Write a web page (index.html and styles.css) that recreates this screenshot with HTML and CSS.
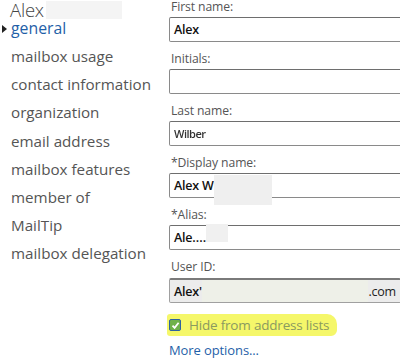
FILE: index.html
```html
<!DOCTYPE html>
<html lang="en">
<head>
    <meta charset="UTF-8">
    <title>Alex - general</title>
    <link rel="stylesheet" href="styles.css">
</head>
<body>
    <div class="page">
        <div class="nav">
            <div class="user-name">Alex<span class="blur blur-name"></span></div>
            <ul class="menu">
                <li class="active">general</li>
                <li>mailbox usage</li>
                <li>contact information</li>
                <li>organization</li>
                <li>email address</li>
                <li>mailbox features</li>
                <li>member of</li>
                <li>MailTip</li>
                <li>mailbox delegation</li>
            </ul>
        </div>
        <div class="form">
            <div class="field">
                <label>First name:</label>
                <div class="input">Alex</div>
            </div>
            <div class="field">
                <label>Initials:</label>
                <div class="input"></div>
            </div>
            <div class="field">
                <label>Last name:</label>
                <div class="input"><span class="smudge">Wilber</span></div>
            </div>
            <div class="field">
                <label>*Display name:</label>
                <div class="input">Alex W<span class="blur blur-display"></span></div>
            </div>
            <div class="field">
                <label>*Alias:</label>
                <div class="input">Ale<span class="dots">....</span><span class="blur blur-alias"></span></div>
            </div>
            <div class="field field-userid">
                <label>User ID:</label>
                <div class="input readonly"><span>Alex'</span><span class="blur blur-userid"></span><span>.com</span></div>
            </div>
            <div class="check-row">
                <span class="checkbox">
                    <svg width="9" height="9" viewBox="0 0 9 9"><path d="M1.5 4.6 L3.6 6.8 L7.6 1.8" fill="none" stroke="#fff" stroke-width="1.8"/></svg>
                </span>
                <span class="highlight">Hide from address lists</span>
            </div>
            <a class="more" href="#">More options...</a>
        </div>
    </div>
</body>
</html>
```

FILE: styles.css
```css
* {
    box-sizing: border-box;
    margin: 0;
    padding: 0;
}

html, body {
    width: 400px;
    height: 358px;
    overflow: hidden;
    background: #fff;
}

body {
    font-family: "Open Sans", "Noto Sans", sans-serif;
    color: #444;
}

.page {
    display: flex;
}

.nav {
    width: 169px;
    flex-shrink: 0;
}

.user-name {
    display: flex;
    align-items: center;
    height: 19px;
    line-height: 19px;
    padding-left: 10px;
    font-size: 18.5px;
    font-weight: 300;
    letter-spacing: -0.2px;
    color: #444;
}

.blur {
    display: inline-block;
    background: #eeeeee;
}

.blur-name {
    width: 76px;
    height: 18px;
    margin-left: 2px;
    background: #f4f4f4;
}

.menu {
    list-style: none;
}

.menu li {
    position: relative;
    height: 28.2px;
    line-height: 26px;
    padding-left: 11px;
    font-size: 15.2px;
    color: #555;
    white-space: nowrap;
}

.menu li.active {
    height: 24px;
    line-height: 18px;
    color: #1f5fa8;
    font-size: 15.8px;
}

.menu li.active::before {
    content: "";
    position: absolute;
    left: 2px;
    top: 6px;
    border-left: 5px solid #222;
    border-top: 4px solid transparent;
    border-bottom: 4px solid transparent;
}

.form {
    flex: 1;
}

.field {
    margin-bottom: 10px;
}

.field label {
    display: block;
    height: 17px;
    line-height: 14px;
    padding-left: 2px;
    font-size: 12.2px;
    color: #555;
    letter-spacing: -0.1px;
}

.input {
    display: flex;
    align-items: center;
    width: 260px;
    height: 25px;
    padding-left: 4px;
    border: 1px solid #8a8a8a;
    border-top-color: #6e6e6e;
    border-radius: 2px;
    font-size: 12.5px;
    font-weight: 600;
    color: #111;
    letter-spacing: -0.2px;
}

.smudge {
    color: #333;
    font-size: 11px;
    letter-spacing: -0.5px;
    filter: blur(0.6px);
}

.blur-display {
    width: 58px;
    height: 30px;
    margin-top: 8px;
    background: #efefef;
}

.dots {
    letter-spacing: 0;
    font-weight: 600;
}

.blur-alias {
    width: 22px;
    height: 18px;
    margin-top: -10px;
    background: #f0f0f0;
}

.field-userid {
    margin-top: 3px;
    margin-bottom: 12px;
}

.field-userid label {
    height: 18px;
}

.readonly {
    width: 232px;
    background: #ececec;
    border-color: #a0a0a0;
    border-top: 2px solid #7a7a7a;
}

.blur-userid {
    flex: 1;
    height: 22px;
    background: #eef0e8;
}

.readonly span:last-child {
    font-weight: 400;
    color: #222;
    padding-right: 4px;
}

.check-row {
    display: flex;
    align-items: center;
    height: 22px;
    margin-top: -1px;
}

.checkbox {
    display: flex;
    align-items: center;
    justify-content: center;
    width: 12px;
    height: 12px;
    border: 1px solid #2f62a0;
    border-radius: 2px;
    background: #6fb24a;
    position: relative;
    z-index: 1;
}

.highlight {
    display: inline-block;
    margin-left: -14px;
    padding: 2px 8px 2px 22px;
    background: #f5f76a;
    border-radius: 3px 10px 6px 3px;
    color: #8a9a60;
    font-size: 13.5px;
    letter-spacing: -0.2px;
}

.more {
    display: block;
    margin-top: 5px;
    font-size: 13px;
    line-height: 18px;
    color: #1f5fa8;
    text-decoration: none;
    letter-spacing: -0.1px;
}
```
